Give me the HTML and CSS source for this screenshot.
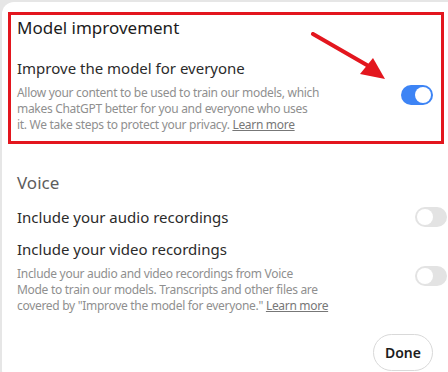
FILE: index.html
```html
<!DOCTYPE html>
<html lang="en">

<head>
    <meta charset="UTF-8">
    <meta name="viewport" content="width=device-width, initial-scale=1.0">
    <title>Data controls</title>
    <link rel="stylesheet" href="styles.css">
</head>

<body>
    <div class="dialog">
        <div class="highlight">
            <h2 class="section-title">Model improvement</h2>
            <div class="setting">
                <div class="setting-text">
                    <div class="setting-label">Improve the model for everyone</div>
                    <p class="setting-desc">Allow your content to be used to train our models, which<br>makes ChatGPT better for you and everyone who uses<br>it. We take steps to protect your privacy. <a href="#">Learn more</a></p>
                </div>
                <span class="toggle on"><span class="knob"></span></span>
            </div>
            <svg class="arrow" width="90" height="60" viewBox="0 0 90 60">
                <line x1="3" y1="2" x2="62" y2="36" stroke="#e3161e" stroke-width="4" stroke-linecap="round"/>
                <polygon points="75,47 50,42 63,26" fill="#e3161e"/>
            </svg>
        </div>

        <div class="voice">
            <h2 class="section-title muted">Voice</h2>
            <div class="setting">
                <div class="setting-text">
                    <div class="setting-label">Include your audio recordings</div>
                </div>
                <span class="toggle"><span class="knob"></span></span>
            </div>
            <div class="setting">
                <div class="setting-text">
                    <div class="setting-label">Include your video recordings</div>
                    <p class="setting-desc">Include your audio and video recordings from Voice<br>Mode to train our models. Transcripts and other files are<br>covered by "Improve the model for everyone." <a href="#">Learn more</a></p>
                </div>
                <span class="toggle"><span class="knob"></span></span>
            </div>
        </div>

        <div class="footer">
            <button class="done">Done</button>
        </div>
    </div>
</body>

</html>
```

FILE: styles.css
```css
body {
    margin: 0;
    background-color: #e6e6e6;
    font-family: "Noto Sans", "Open Sans", sans-serif;
    color: #2b2b2b;
}

.dialog {
    margin: 2px 0 0 2px;
    width: 460px;
    height: 380px;
    padding-top: 10px;
    background-color: #fff;
    border-radius: 12px;
    box-sizing: border-box;
}

.highlight {
    position: relative;
    margin-left: 6px;
    width: 436px;
    padding: 0 8px 8px 6px;
    border: 3px solid #e3161e;
    box-sizing: border-box;
}

.section-title {
    margin: 0;
    font-size: 17px;
    font-weight: 400;
    line-height: 26px;
    color: #1c1c1c;
}

.section-title.muted {
    color: #5d5d5d;
}

.setting {
    display: flex;
    align-items: center;
    justify-content: space-between;
}

.highlight .setting {
    margin-top: 16px;
}

.setting-label {
    font-size: 15px;
    line-height: 22px;
}

.setting-desc {
    margin: 6px 0 0;
    font-size: 12px;
    letter-spacing: -0.3px;
    line-height: 16px;
    color: #8f8f8f;
    white-space: nowrap;
}

.setting-desc a {
    color: #777;
}

.toggle {
    position: relative;
    flex: none;
    width: 32px;
    height: 20px;
    border-radius: 10px;
    background-color: #e3e3e3;
}

.toggle.on {
    background-color: #3d84f5;
}

.knob {
    position: absolute;
    top: 2px;
    left: 2px;
    width: 16px;
    height: 16px;
    border-radius: 50%;
    background-color: #fff;
}

.toggle.on .knob {
    left: 14px;
}

.arrow {
    position: absolute;
    left: 299px;
    top: 17px;
}

.voice {
    padding: 26px 15px 0 15px;
}

.voice .setting {
    margin-top: 10px;
}

.footer {
    display: flex;
    justify-content: flex-end;
    padding: 20px 29px 0 0;
}

.done {
    width: 60px;
    height: 37px;
    border: 1px solid #d9d9d9;
    border-radius: 19px;
    background-color: #fff;
    font-family: inherit;
    font-size: 14px;
    font-weight: 600;
    color: #1c1c1c;
}
```
